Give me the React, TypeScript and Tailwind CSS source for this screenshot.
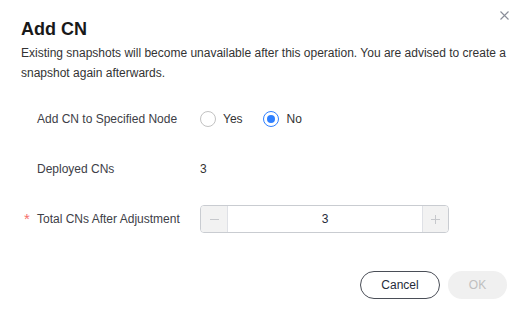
import { useState } from 'react';

export default function App() {
  const [toNode, setToNode] = useState(false);
  const [total, setTotal] = useState(3);

  return (
    <div className="relative w-[529px] h-[312px] bg-white font-['Liberation_Sans',Arial,sans-serif] text-[#252b3a]">
      {/* Close */}
      <button className="absolute right-[20px] top-[11px] w-[9px] h-[9px] text-[#8a8e99]">
        <svg width="9" height="9" viewBox="0 0 9 9" fill="none" stroke="currentColor" strokeWidth="1.1">
          <path d="M0.5 0.5L8.5 8.5M8.5 0.5L0.5 8.5" />
        </svg>
      </button>

      <div className="px-[21px] pt-[17px]">
        <h2 className="text-[18px] leading-6 font-bold text-[#191919]">Add CN</h2>
        <p className="mt-[2px] text-[12px] leading-[20px] text-[#333]">
          Existing snapshots will become unavailable after this operation. You are advised to create a snapshot again afterwards.
        </p>
      </div>

      {/* Form */}
      <div className="pl-[37px] mt-[24px] flex flex-col text-[12px]">
        <div className="flex items-center h-[24px]">
          <div className="w-[163px] text-[#3d4047]">Add CN to Specified Node</div>
          <label className="flex items-center cursor-pointer" onClick={() => setToNode(true)}>
            <span className={`w-4 h-4 rounded-full border ${toNode ? 'border-[#2f80ff]' : 'border-[#c2c2c2]'} flex items-center justify-center`}>
              {toNode && <span className="w-2 h-2 rounded-full bg-[#2f80ff]" />}
            </span>
            <span className="ml-[7px] text-[#333]">Yes</span>
          </label>
          <label className="flex items-center cursor-pointer ml-[20px]" onClick={() => setToNode(false)}>
            <span className={`w-4 h-4 rounded-full border ${!toNode ? 'border-[#2f80ff]' : 'border-[#c2c2c2]'} flex items-center justify-center`}>
              {!toNode && <span className="w-2 h-2 rounded-full bg-[#2f80ff]" />}
            </span>
            <span className="ml-[8px] text-[#333]">No</span>
          </label>
        </div>

        <div className="flex items-center h-[24px] mt-[26px]">
          <div className="w-[163px] text-[#3d4047]">Deployed CNs</div>
          <div className="text-[#333]">3</div>
        </div>

        <div className="flex items-center h-[28px] mt-[24px]">
          <div className="relative w-[163px] text-[#3d4047]">
            <span className="absolute -left-[13px] top-[1px] text-[15px] leading-[15px] text-[#f66f6a]">*</span>
            Total CNs After Adjustment
          </div>
          <div className="flex w-[249px] h-[28px] border border-[#c9ccd1] rounded-[4px] overflow-hidden">
            <button
              className="w-[27px] bg-[#f2f2f2] text-[#c6c8cc] border-r border-[#dfe1e6] flex items-center justify-center"
              onClick={() => setTotal(Math.max(0, total - 1))}
            >
              <svg width="9" height="1" viewBox="0 0 9 1"><path d="M0 0.5H9" stroke="currentColor" /></svg>
            </button>
            <input
              className="flex-1 min-w-0 text-center outline-none text-[12px] text-[#252b3a]"
              value={total}
              onChange={(e) => setTotal(Number(e.target.value) || 0)}
            />
            <button
              className="w-[26px] bg-[#f2f2f2] text-[#c6c8cc] border-l border-[#dfe1e6] flex items-center justify-center"
              onClick={() => setTotal(total + 1)}
            >
              <svg width="9" height="9" viewBox="0 0 9 9"><path d="M0 4.5H9M4.5 0V9" stroke="currentColor" /></svg>
            </button>
          </div>
        </div>
      </div>

      {/* Footer */}
      <div className="flex justify-end gap-[8px] pr-[22px] mt-[38px]">
        <button className="w-[80px] h-[28px] rounded-full border border-[#4a4e57] text-[12px] text-[#252b3a]">Cancel</button>
        <button disabled className="w-[59px] h-[28px] rounded-full bg-[#f0f0f0] text-[12px] text-[#bfbfbf]">OK</button>
      </div>
    </div>
  );
}
